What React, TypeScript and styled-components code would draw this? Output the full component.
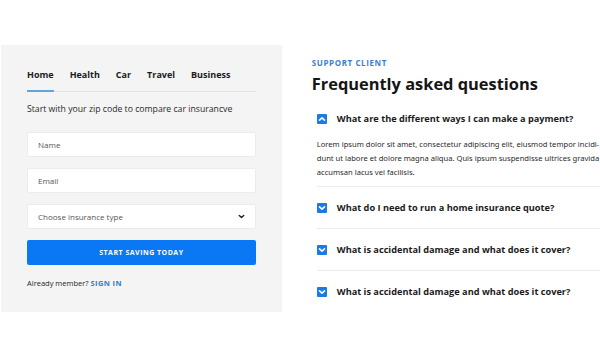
import styled, { createGlobalStyle } from "styled-components";

const GlobalStyle = createGlobalStyle`
  html, body {
    margin: 0;
    padding: 0;
    background: #ffffff;
    overflow: hidden;
  }
  body {
    font-family: "Open Sans", "Noto Sans", sans-serif;
    color: #1d1d1f;
  }
  * {
    box-sizing: border-box;
  }
`;

const Page = styled.div`
  display: flex;
  align-items: flex-start;
  padding-top: 45px;
  width: 640px;
`;

const FormPanel = styled.div`
  width: 282px;
  height: 267px;
  margin-left: 1px;
  background: #f4f4f4;
  padding: 20px 26px 0 26px;
`;

const Tabs = styled.div`
  display: flex;
  gap: 16px;
  border-bottom: 1px solid #e3e3e3;
`;

const Tab = styled.div<{ $active?: boolean }>`
  font-size: 9px;
  font-weight: 700;
  color: #1b1b1b;
  padding: 3px 0 9px 0;
  border-bottom: 2px solid ${(p) => (p.$active ? "#66a0e0" : "transparent")};
  margin-bottom: -1px;
`;

const Lead = styled.p`
  margin: 11px 0 17px 0;
  font-size: 8.7px;
  color: #2a2a2a;
`;

const Fields = styled.div`
  display: flex;
  flex-direction: column;
  gap: 11px;
`;

const Field = styled.div`
  height: 25px;
  background: #ffffff;
  border: 1px solid #ececec;
  border-radius: 2px;
  display: flex;
  align-items: center;
  justify-content: space-between;
  padding: 0 9px 0 10px;
  font-size: 8px;
  color: #555;
`;

const Button = styled.button`
  height: 25px;
  border: none;
  border-radius: 2px;
  background: #0a78f5;
  color: #ffffff;
  font-family: inherit;
  font-size: 7px;
  font-weight: 700;
  letter-spacing: 0.5px;
`;

const Member = styled.p`
  margin: 13px 0 0 0;
  font-size: 7.5px;
  color: #1d1d1f;

  a {
    color: #2f7fd0;
    font-weight: 700;
    letter-spacing: 0.4px;
    text-decoration: none;
  }
`;

const FaqColumn = styled.div`
  margin-left: 30px;
  width: 330px;
  padding-top: 12px;
`;

const Eyebrow = styled.div`
  font-size: 8px;
  font-weight: 700;
  letter-spacing: 0.6px;
  color: #3a7fd0;
`;

const Title = styled.h1`
  margin: 4px 0 2px 0;
  font-size: 16.4px;
  font-weight: 700;
  color: #151515;
`;

const Item = styled.div<{ $open?: boolean; $last?: boolean }>`
  margin-left: 5px;
  padding: ${(p) => (p.$open ? "15px 0 7px 0" : "14px 0")};
  border-bottom: ${(p) => (p.$last ? "none" : "1px solid #ececec")};
`;

const Question = styled.div`
  display: flex;
  align-items: center;
  gap: 10px;
  font-size: 9.2px;
  font-weight: 700;
  color: #1b1b1b;
`;

const Toggle = styled.span`
  width: 10px;
  height: 10px;
  border-radius: 1px;
  background: #1a7ae6;
  display: inline-flex;
  align-items: center;
  justify-content: center;
  flex-shrink: 0;
`;

const Answer = styled.p`
  margin: 12px 0 0 0;
  font-family: "Noto Sans", sans-serif;
  font-size: 7.6px;
  line-height: 14px;
  white-space: nowrap;
  color: #2a2a2a;
`;

function Chevron({ up, color, size }: { up?: boolean; color: string; size: number }) {
  return (
    <svg width={size} height={size} viewBox="0 0 10 10">
      <path
        d={up ? "M2.5 6.2 L5 3.8 L7.5 6.2" : "M2.5 3.8 L5 6.2 L7.5 3.8"}
        fill="none"
        stroke={color}
        strokeWidth={1.6}
        strokeLinecap="round"
        strokeLinejoin="round"
      />
    </svg>
  );
}

const questions = [
  "What do I need to run a home insurance quote?",
  "What is accidental damage and what does it cover?",
  "What is accidental damage and what does it cover?",
];

export default function App() {
  return (
    <>
      <GlobalStyle />
      <Page>
        <FormPanel>
          <Tabs>
            <Tab $active>Home</Tab>
            <Tab>Health</Tab>
            <Tab>Car</Tab>
            <Tab>Travel</Tab>
            <Tab>Business</Tab>
          </Tabs>
          <Lead>Start with your zip code to compare car insurancve</Lead>
          <Fields>
            <Field>Name</Field>
            <Field>Email</Field>
            <Field>
              Choose insurance type
              <Chevron color="#222" size={9} />
            </Field>
            <Button>START SAVING TODAY</Button>
          </Fields>
          <Member>
            Already member? <a href="#">SIGN IN</a>
          </Member>
        </FormPanel>
        <FaqColumn>
          <Eyebrow>SUPPORT CLIENT</Eyebrow>
          <Title>Frequently asked questions</Title>
          <Item $open>
            <Question>
              <Toggle>
                <Chevron up color="#fff" size={10} />
              </Toggle>
              What are the different ways I can make a payment?
            </Question>
            <Answer>
              Lorem ipsum dolor sit amet, consectetur adipiscing elit, eiusmod tempor incidi-
              <br />
              dunt ut labore et dolore magna aliqua. Quis ipsum suspendisse ultrices gravida
              <br />
              accumsan lacus vel facilisis.
            </Answer>
          </Item>
          {questions.map((q, i) => (
            <Item key={i} $last={i === questions.length - 1}>
              <Question>
                <Toggle>
                  <Chevron color="#fff" size={10} />
                </Toggle>
                {q}
              </Question>
            </Item>
          ))}
        </FaqColumn>
      </Page>
    </>
  );
}
